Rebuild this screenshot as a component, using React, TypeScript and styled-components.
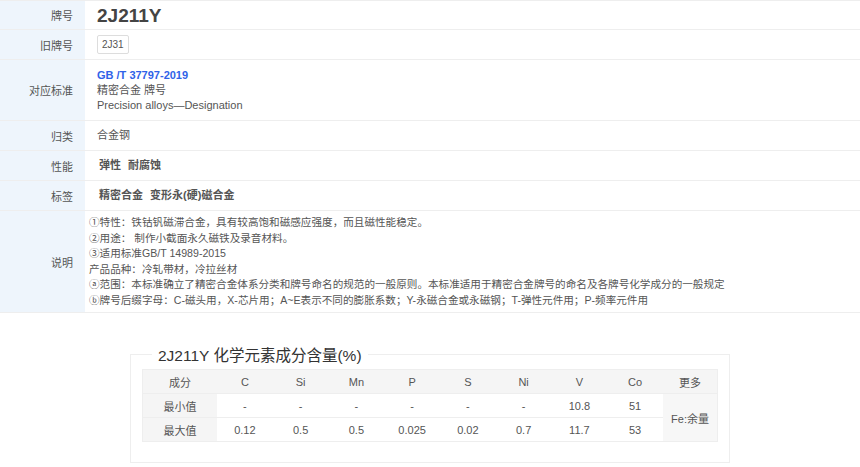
import React from "react";
import styled, { createGlobalStyle } from "styled-components";

const G = createGlobalStyle`
  body { margin:0; background:#fff; font-family: Arial, "Liberation Sans", "Noto Sans CJK SC", sans-serif; color:#555; }
`;
const Info = styled.div`border-top:1px solid #eee;`;
const Row = styled.div<{ h: number }>`
  display:grid; grid-template-columns:85px 1fr; min-height:${p => p.h}px;
  border-bottom:1px solid #eee; box-sizing:border-box;
`;
const Label = styled.div`
  background:#eef5fc; display:flex; align-items:center; justify-content:flex-end;
  padding-right:12px; font-size:11px; color:#555;
`;
const Value = styled.div`
  padding:0 12px; display:flex; flex-direction:column; justify-content:center; font-size:11px; line-height:15px;
`;
const Big = styled.div`font-size:19px; font-weight:bold; color:#444;`;
const Tag = styled.span`
  display:inline-block; align-self:flex-start; border:1px solid #ddd; border-radius:2px;
  font-size:10px; padding:2px 4px; line-height:13px;
`;
const Link = styled.a`color:#2f62e8; font-weight:bold; text-decoration:none;`;
const Strong = styled.div`font-weight:bold; word-spacing:4px; padding-left:2px; color:#555;`;
const Desc = styled.div`padding:4px 4px; font-size:10.6px; line-height:15.5px;`;
const Field = styled.fieldset`
  margin:30px 0 0 130px; width:600px; box-sizing:border-box; border:1px solid #eee;
  padding:4px 11px 20px;
`;
const Legend = styled.legend`font-size:15.5px; color:#333; padding:0 6px; margin-left:10px;`;
const Table = styled.table`
  width:100%; border-collapse:collapse; table-layout:fixed; font-size:11px; text-align:center; color:#555;
  border:1px solid #eee;
  td { height:23px; padding:0; border-bottom:1px solid #eee; }
  tr:first-child td { background:#f5f5f5; }
  td:first-child { background:#f5f5f5; width:74px; }
  td:last-child { width:54px; }
`;
const More = styled.td`background:#f7f7f7;`;

const els = ["C","Si","Mn","P","S","Ni","V","Co"];
const mins = ["-","-","-","-","-","-","10.8","51"];
const maxs = ["0.12","0.5","0.5","0.025","0.02","0.7","11.7","53"];

export default function App() {
  return (
    <>
      <G />
      <Info>
        <Row h={29}><Label>牌号</Label><Value><Big>2J211Y</Big></Value></Row>
        <Row h={30}><Label>旧牌号</Label><Value><Tag>2J31</Tag></Value></Row>
        <Row h={61}><Label>对应标准</Label><Value>
          <Link>GB /T 37797-2019</Link><div>精密合金 牌号</div><div>Precision alloys—Designation</div>
        </Value></Row>
        <Row h={30}><Label>归类</Label><Value>合金钢</Value></Row>
        <Row h={30}><Label>性能</Label><Value><Strong>弹性 耐腐蚀</Strong></Value></Row>
        <Row h={30}><Label>标签</Label><Value><Strong>精密合金 变形永(硬)磁合金</Strong></Value></Row>
        <Row h={100}><Label>说明</Label><Desc>
          <div>①特性：铁钴钒磁滞合金，具有较高饱和磁感应强度，而且磁性能稳定。</div>
          <div>②用途： 制作小截面永久磁铁及录音材料。</div>
          <div>③适用标准GB/T 14989-2015</div>
          <div>产品品种：冷轧带材，冷拉丝材</div>
          <div>ⓐ范围：本标准确立了精密合金体系分类和牌号命名的规范的一般原则。本标准适用于精密合金牌号的命名及各牌号化学成分的一般规定</div>
          <div>ⓑ牌号后缀字母：C-磁头用，X-芯片用；A~E表示不同的膨胀系数；Y-永磁合金或永磁钢；T-弹性元件用；P-频率元件用</div>
        </Desc></Row>
      </Info>
      <Field>
        <Legend>2J211Y 化学元素成分含量(%)</Legend>
        <Table><tbody>
          <tr><td>成分</td>{els.map(e => <td key={e}>{e}</td>)}<td>更多</td></tr>
          <tr><td>最小值</td>{mins.map((e,i) => <td key={i}>{e}</td>)}<More rowSpan={2}>Fe:余量</More></tr>
          <tr><td>最大值</td>{maxs.map((e,i) => <td key={i}>{e}</td>)}</tr>
        </tbody></Table>
      </Field>
    </>
  );
}
